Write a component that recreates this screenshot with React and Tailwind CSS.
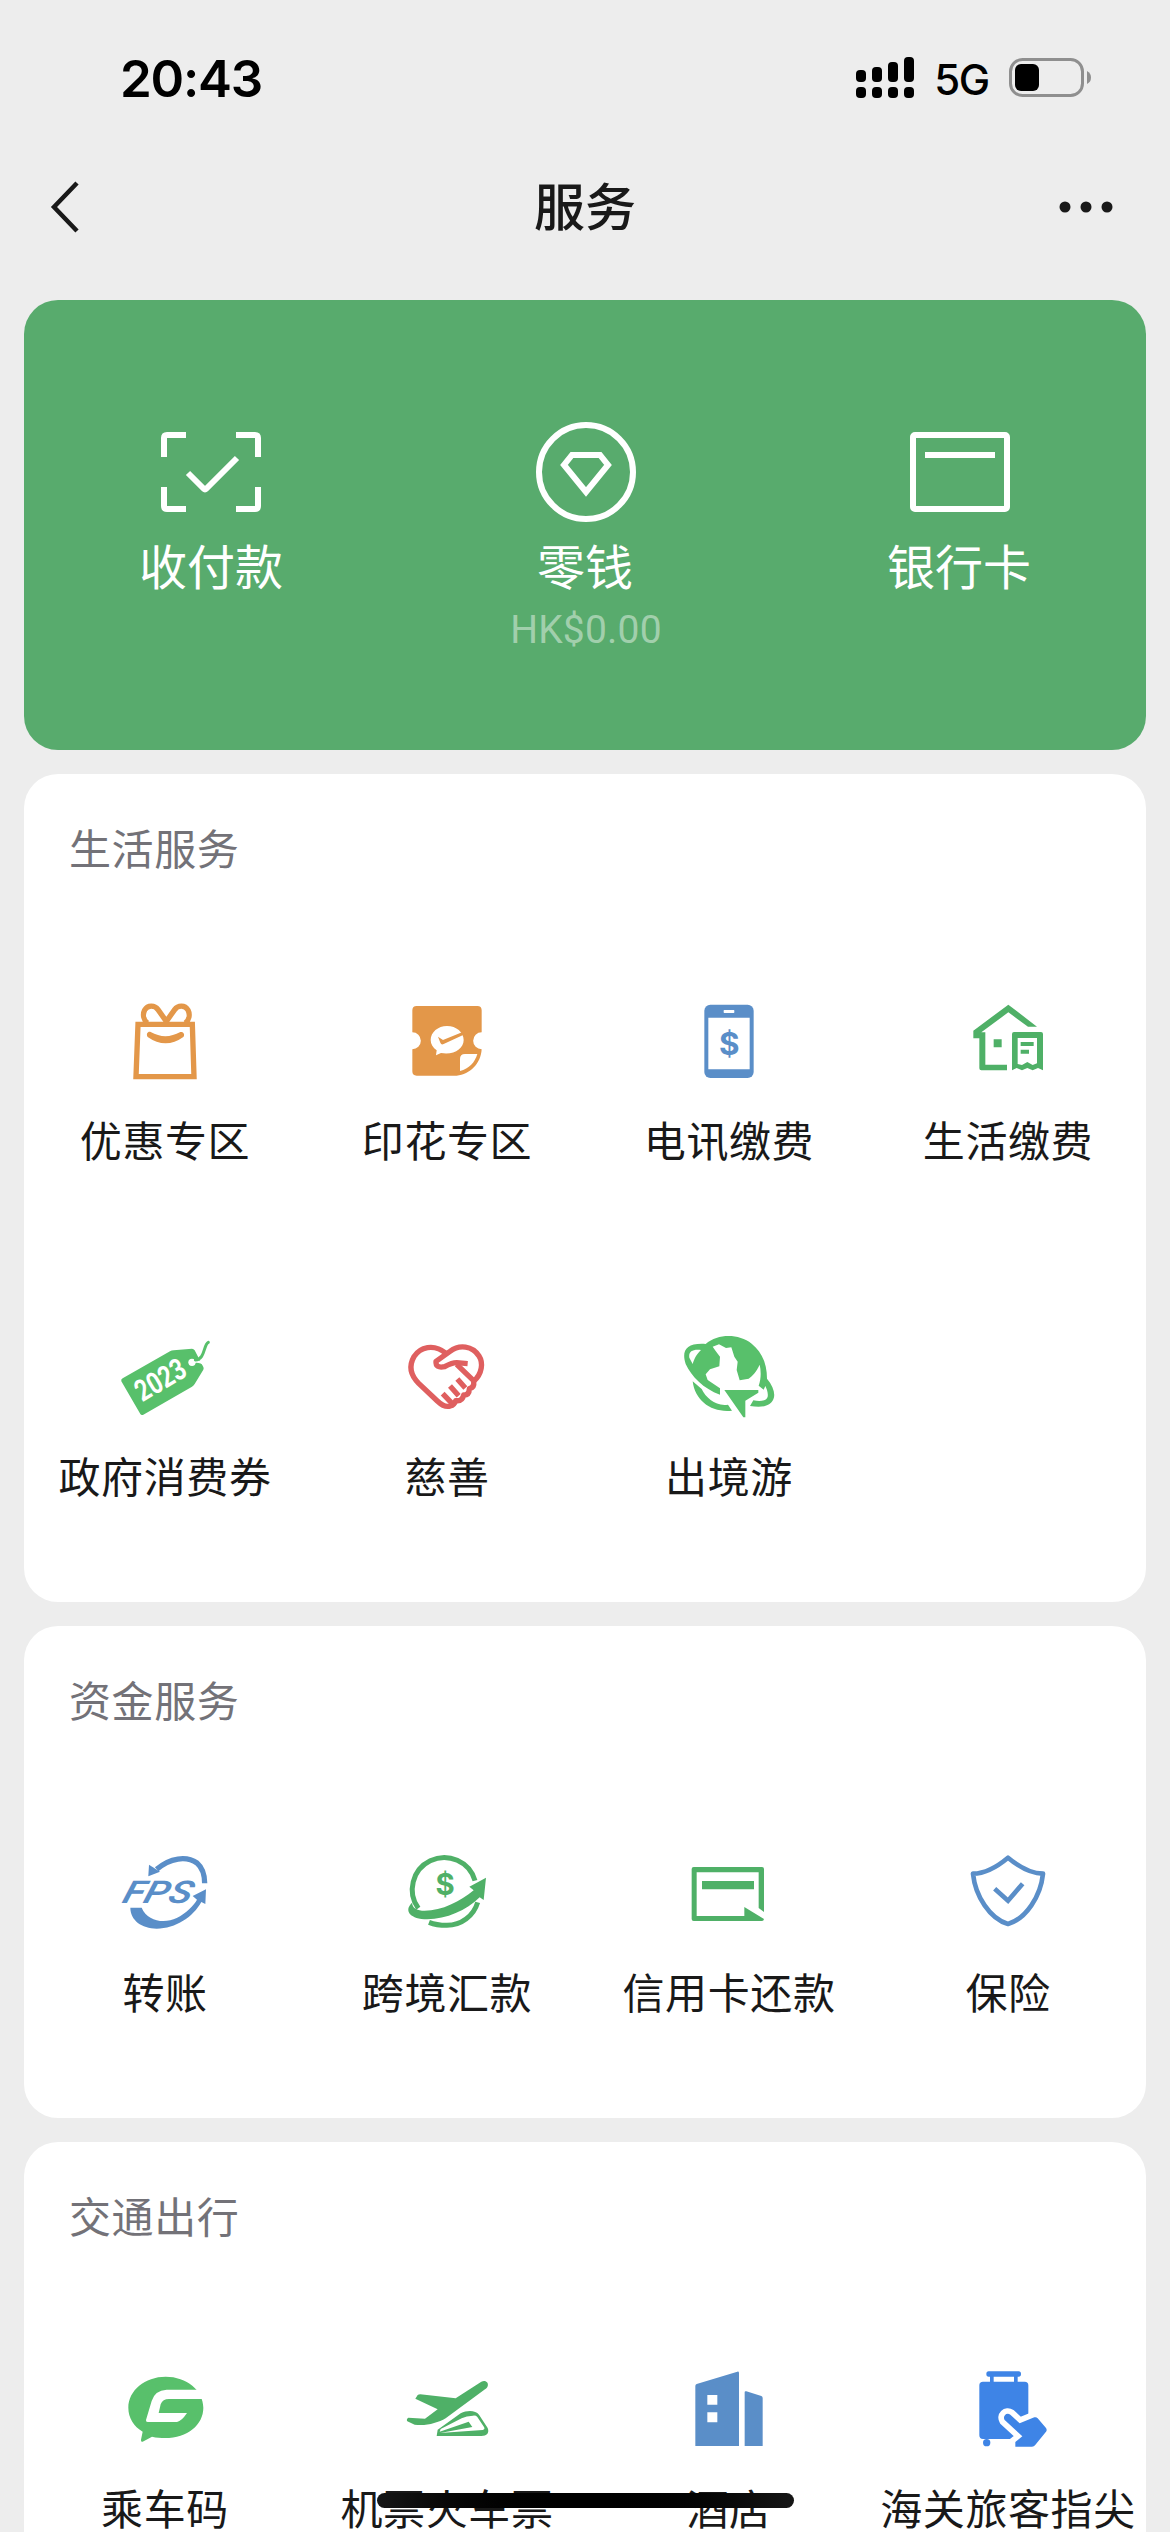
const ORANGE = '#e39749';
const BLUE = '#5a8ec8';
const GREEN = '#4fb067';
const LIGHT_GREEN = '#58c06b';

function Icon({ box, children }) {
  return (
    <svg viewBox={box} className="w-24 h-24 overflow-visible" fill="none">
      {children}
    </svg>
  );
}

const GiftBag = () => (
  <Icon box="171 69 288 288">
    <g stroke={ORANGE} strokeWidth="16">
      <path d="M234 163H397L402 320H228Z" />
      <path d="M319 154 294 119C284 105 263 105 254 120C247 134 251 150 262 159M319 154 344 119C354 105 375 105 384 120C391 134 387 150 376 159" />
    </g>
    <path d="M272 186Q316 211 361 186C370 184 376 193 370 201Q317 239 263 201C257 192 264 183 272 186Z" fill={ORANGE} />
  </Icon>
);

const Stamp = () => (
  <Icon box="1017 69 288 288">
    <path
      d="M1070 108H1252Q1265 108 1265 121V187A25 25 0 0 0 1265 238C1263 280 1230 314 1190 317H1070Q1057 317 1057 304V238A25 25 0 0 0 1057 187V121Q1057 108 1070 108Z"
      fill={ORANGE}
    />
    <path d="M1200 303V267Q1200 252 1215 252H1252C1245 277 1227 296 1200 303Z" fill="#fff" />
    <path d="M1161 168C1189 168 1211 187 1211 210C1211 236 1182 256 1143 249L1128 256L1130 241C1119 233 1112 222 1112 210C1112 187 1134 168 1161 168Z" fill="#fff" />
    <path d="M1134 200 1149 210 1208 186 1211 194 1151 222Q1144 226 1141 218Z" fill={ORANGE} />
  </Icon>
);

const Phone = () => (
  <Icon box="123 69 288 288">
    <rect x="193" y="104" width="148" height="220" rx="18" fill={BLUE} />
    <path d="M205 143H329V298H205Z" fill="#fff" />
    <rect x="251" y="120" width="32" height="9" rx="2" fill="#fff" />
    <text x="268" y="256" textAnchor="middle" fontSize="94" fontWeight="700" fontFamily="Inter, sans-serif" fill={BLUE}>$</text>
  </Icon>
);

const House = () => (
  <Icon box="960 69 288 288">
    <g fill={GREEN}>
      <path d="M1000 182 1105 104 1191 170H1164L1105 127 1024 187H1036V284H1101V301H1024Q1018 301 1018 295V205H1000Z" />
      <path d="M1061 208h24v24h-24zM1142 216h39v12h-39zM1142 239h25v12h-25z" />
      <path
        fillRule="evenodd"
        d="M1122 186H1203Q1209 186 1209 192V301L1194 294 1178 301 1162 294 1146 301 1130 294 1116 301V192Q1116 186 1122 186ZM1133 204V282L1146 285 1162 276 1178 285 1191 280V204Z"
      />
    </g>
  </Icon>
);

const VoucherTag = () => (
  <Icon box="201 57 288 288">
    <path
      d="M218 205 360 124Q365 121 371 121L426 116Q431 116 434 121L460 171Q462 175 460 179L434 222Q431 227 426 230L280 314Q274 317 271 312L214 214Q212 208 218 205Z"
      fill={LIGHT_GREEN}
    />
    <path d="M426 156C446 152 458 158 464 166" stroke="#fff" strokeWidth="7" />
    <circle cx="426" cy="157" r="11" fill="#fff" />
    <path d="M436 150C466 148 460 104 475 97" stroke={LIGHT_GREEN} strokeWidth="9" strokeLinecap="round" />
    <text
      transform="translate(277 277) rotate(-30.5)"
      fontSize="90"
      fontWeight="700"
      fontFamily="Roboto, sans-serif"
      textLength="162"
      lengthAdjust="spacingAndGlyphs"
      fill="#fff"
    >
      2023
    </text>
  </Icon>
);

const HeartHands = () => (
  <Icon box="1047 57 288 288">
    <g stroke="#df5f5f" strokeWidth="16" strokeLinejoin="round">
      <path d="M1188 130C1150 99 1110 112 1092 140C1075 170 1084 198 1106 220L1162 273Q1184 294 1201 288Q1213 285 1217 272Q1237 275 1241 255Q1258 255 1258 236Q1274 232 1271 214" />
      <path d="M1271 214C1297 191 1300 158 1287 138C1267 107 1228 103 1200 124L1158 154Q1156 176 1184 170Q1206 158 1220 158L1253 161" />
      <path d="M1220 163 1273 214M1222 207 1246 234M1200 228 1226 257M1178 251 1206 280" />
    </g>
  </Icon>
);

const Globe = () => (
  <Icon box="183 57 288 288">
    <g fill={LIGHT_GREEN}>
      <path
        fillRule="evenodd"
        d="M257 102C295 70 356 71 395 101C427 127 441 163 441 206C458 226 465 246 462 262C456 290 425 294 390 288L400 271C425 276 440 271 443 260C445 248 440 237 436 228L431 239 416 227C424 204 423 182 419 164C409 185 399 197 386 206L359 211 350 180 353 155 343 140 334 112 318 114 297 103 278 110 287 123 300 140 298 169 270 178 257 193 263 210 300 235V254C250 236 215 200 197 162C184 123 198 98 257 102ZM243 120C217 117 205 125 208 143L218 162C224 143 231 132 243 120Z"
      />
      <path d="M218 214 245 237C258 264 288 290 324 284L336 302C275 309 225 273 218 214ZM313 240H415V248L376 272V322H370Z" />
    </g>
  </Icon>
);

const Fps = () => (
  <Icon box="171 45 288 288">
    <path d="M290 118C330 83 380 77 411 99Q434 119 434 160" stroke={BLUE} strokeWidth="16" />
    <g fill={BLUE}>
      <path d="M267 104 265 139 300 125Z" />
      <path d="M211 233H245C262 274 313 282 350 264C378 250 402 226 411 209L398 198 438 178 436 222 424 216C400 260 347 296 290 296C245 295 211 271 211 233Z" />
    </g>
    <text
      transform="translate(183 218) skewX(-17)"
      fontSize="94"
      fontWeight="600"
      fontStyle="italic"
      fontFamily="Roboto, sans-serif"
      textLength="206"
      lengthAdjust="spacingAndGlyphs"
      fill={BLUE}
    >
      FPS
    </text>
  </Icon>
);

const Remit = () => (
  <Icon box="1017 45 288 288">
    <path d="M1075 235A96 96 0 1 1 1245 152M1107 277Q1130 286 1160 286A96 96 0 0 0 1253 217" stroke={GREEN} strokeWidth="15" />
    <path
      d="M1056 218C1058 233 1066 239 1086 242C1140 245 1200 216 1241 181L1228 170 1278 143 1271 210 1259 202C1215 245 1148 273 1084 267C1042 259 1036 237 1056 218Z"
      fill={GREEN}
    />
    <text x="1155" y="196" textAnchor="middle" fontSize="88" fontWeight="700" fontFamily="Inter, sans-serif" fill={GREEN}>$</text>
  </Icon>
);

const CreditCard = () => (
  <Icon box="243 45 288 288">
    <g fill={GREEN}>
      <path d="M281 111H486Q492 111 492 117V246L476 234V127H290V258H433V231L492 267Q491 273 486 273H281Q275 273 275 267V117Q275 111 281 111Z" />
      <path d="M306 153h156v25h-156z" />
    </g>
  </Icon>
);

const Shield = () => (
  <Icon box="1080 45 288 288">
    <g stroke={BLUE} strokeWidth="14" strokeLinejoin="round">
      <path d="M1224 83Q1280 130 1329 131C1322 199 1278 266 1224 282C1170 266 1126 199 1119 131Q1168 130 1224 83Z" />
      <path d="M1184 176 1224 212 1268 161" strokeLinejoin="miter" />
    </g>
  </Icon>
);

const RideCode = () => (
  <Icon box="171 63 288 288">
    <path d="M317 110C380 110 430 151 430 203C430 263 364 309 276 290L248 305Q242 307 243 299L248 275C221 259 205 233 205 203C205 151 255 110 317 110Z" fill={LIGHT_GREEN} />
    <path d="M440 149H320Q284 151 275 183L258 240Q257 246 263 246H351Q365 243 381 219H296L302 193Q308 177 327 177H440Z" fill="#fff" />
  </Icon>
);

const PlaneTrain = () => (
  <Icon box="1017 63 288 288">
    <path
      d="M1187 175 1264 125C1276 119 1287 127 1283 139C1281 144 1277 147 1271 151L1157 235C1133 249 1097 259 1064 254L1042 244Q1038 238 1045 233L1095 236 1133 208 1066 176 1073 165Q1076 163 1081 163Z"
      fill={GREEN}
    />
    <path
      fillRule="evenodd"
      d="M1130 288 1133 269 1202 220C1222 210 1247 211 1257 224L1283 264C1289 279 1280 288 1264 288ZM1142 267 1139 275 1226 245 1237 261 1140 279 1268 270Q1276 268 1272 261L1252 231Q1248 226 1239 227 1219 228 1205 235Z"
      fill={GREEN}
    />
  </Icon>
);

const Hotel = () => (
  <Icon box="243 63 288 288">
    <path
      fillRule="evenodd"
      d="M286 138Q286 134 290 132L412 95Q417 94 417 99V318H286ZM322 165V194H352V165ZM322 217V247H352V217ZM434 157Q434 152 439 154L484 168Q488 170 488 174V318H434Z"
      fill={BLUE}
    />
  </Icon>
);

const Luggage = () => (
  <Icon box="1080 63 288 288">
    <g fill="#3e84e6">
      <path d="M1166 94H1256Q1263 94 1263 102T1256 110H1253V125H1274Q1285 125 1285 136V286Q1285 297 1274 297H1149Q1138 297 1138 286V136Q1138 125 1149 125H1170V110H1166Q1159 110 1159 102T1166 94ZM1181 110V125H1242V110Z" fillRule="evenodd" />
      <circle cx="1160" cy="308" r="11" />
      <path
        d="M1214 240C1207 229 1219 216 1231 224L1259 250 1303 232Q1309 230 1313 235L1338 264Q1342 270 1338 275L1305 316Q1302 320 1296 320H1246V306L1267 289Z"
        stroke="#fff"
        strokeWidth="34"
        paintOrder="stroke"
      />
    </g>
  </Icon>
);

const sections = [
  {
    title: '生活服务',
    items: [
      { name: '优惠专区', icon: GiftBag },
      { name: '印花专区', icon: Stamp },
      { name: '电讯缴费', icon: Phone },
      { name: '生活缴费', icon: House },
      { name: '政府消费券', icon: VoucherTag },
      { name: '慈善', icon: HeartHands },
      { name: '出境游', icon: Globe },
    ],
  },
  {
    title: '资金服务',
    items: [
      { name: '转账', icon: Fps },
      { name: '跨境汇款', icon: Remit },
      { name: '信用卡还款', icon: CreditCard },
      { name: '保险', icon: Shield },
    ],
  },
  {
    title: '交通出行',
    items: [
      { name: '乘车码', icon: RideCode },
      { name: '机票火车票', icon: PlaneTrain },
      { name: '酒店', icon: Hotel },
      { name: '海关旅客指尖', icon: Luggage },
    ],
  },
];

function StatusBar() {
  return (
    <div className="h-[156px] pl-[120px] pr-[78px] flex items-center justify-between font-['Inter',sans-serif] text-black">
      <span className="text-[51px] leading-none font-semibold tracking-[-1.2px]">20:43</span>
      <div className="flex items-center">
        <svg width="58" height="42" viewBox="0 0 58 42">
          <rect x="0" y="13" width="10" height="12" rx="4" />
          <rect x="16" y="10" width="10" height="15" rx="4" />
          <rect x="32" y="5" width="10" height="20" rx="4" />
          <rect x="48" y="0" width="10" height="25" rx="4" />
          <rect x="0" y="30" width="10" height="11" rx="4" />
          <rect x="16" y="30" width="10" height="11" rx="4" />
          <rect x="32" y="30" width="10" height="11" rx="4" />
          <rect x="48" y="30" width="10" height="11" rx="4" />
        </svg>
        <span className="w-[95px] pt-[3px] text-center text-[42px] leading-none font-medium tracking-[-1.5px]">5G</span>
        <svg width="83" height="40" viewBox="0 0 83 40">
          <rect x="1.5" y="1.5" width="72" height="36" rx="12" fill="none" stroke="#8f8f8f" strokeWidth="3" />
          <rect x="6" y="6" width="24" height="27" rx="6" />
          <path d="M78 13Q82 15 82 19.500T78 26Z" fill="#8f8f8f" />
        </svg>
      </div>
    </div>
  );
}

function NavBar() {
  return (
    <div className="h-[102px] pl-[50px] pr-[57px] grid grid-cols-[1fr_auto_1fr] items-center text-[#191919]">
      <svg width="30" height="52" viewBox="0 0 30 52" fill="none" stroke="currentColor" strokeWidth="4.5">
        <path d="M27 2 4 26 27 50" />
      </svg>
      <h1 className="pl-[7px] pb-[5px] text-[51px] leading-none font-medium">服务</h1>
      <svg className="justify-self-end" width="54" height="12" viewBox="0 0 54 12" fill="currentColor">
        <circle cx="6" cy="6" r="5.5" />
        <circle cx="27" cy="6" r="5.5" />
        <circle cx="48" cy="6" r="5.5" />
      </svg>
    </div>
  );
}

function WalletCard() {
  return (
    <div className="h-[450px] pt-[120px] grid grid-cols-3 rounded-[34px] bg-[#58ab6d] text-white">
      <div className="flex flex-col items-center">
        <svg width="104" height="104" viewBox="0 0 104 104" fill="none" stroke="#fff" strokeWidth="6">
          <path d="M5 37V18Q5 15 8 15H27M77 15H96Q99 15 99 18V37M99 67V86Q99 89 96 89H77M27 89H8Q5 89 5 86V67" />
          <path d="M29 53 45 69Q46 70 47 69L78 38" />
        </svg>
        <span className="mt-3 text-[48px] leading-[56px]">收付款</span>
      </div>
      <div className="flex flex-col items-center">
        <svg width="104" height="104" viewBox="0 0 104 104" fill="none" stroke="#fff" strokeWidth="6">
          <circle cx="53" cy="52" r="47" />
          <path d="M39 35H67L75 45 53 72 31 45Z" />
        </svg>
        <span className="mt-3 text-[48px] leading-[56px]">零钱</span>
        <span className="mt-4 pl-0.5 text-[39px] leading-[44px] tracking-[0.2px] text-white/45 font-['Roboto',sans-serif]">HK$0.00</span>
      </div>
      <div className="flex flex-col items-center">
        <svg width="104" height="104" viewBox="0 0 104 104" fill="none" stroke="#fff" strokeWidth="6">
          <rect x="6" y="15" width="94" height="74" rx="2" />
          <path d="M18 35H88" />
        </svg>
        <span className="mt-3 text-[48px] leading-[56px]">银行卡</span>
      </div>
    </div>
  );
}

function Section({ title, items }) {
  return (
    <section className="rounded-[34px] bg-white">
      <h2 className="h-[156px] pt-[45px] pl-[45px] text-[42px] leading-[56px] tracking-[0.6px] text-[#737278]">{title}</h2>
      <div className="grid grid-cols-[282px_282px_282px_276px]">
        {items.map(({ name, icon: ServiceIcon }) => (
          <div key={name} className="h-[336px] pt-[63px] flex flex-col items-center">
            <ServiceIcon />
            <span className="mt-[27px] text-[42px] leading-[46px] tracking-[0.6px] text-[#191919] whitespace-nowrap">{name}</span>
          </div>
        ))}
      </div>
    </section>
  );
}

export default function App() {
  return (
    <div className="relative w-[1170px] h-[2532px] overflow-hidden bg-[#ededed] font-['Noto_Sans_CJK_SC',sans-serif]">
      <StatusBar />
      <NavBar />
      <main className="mt-[42px] px-6 flex flex-col gap-6">
        <WalletCard />
        {sections.map(section => (
          <Section key={section.title} title={section.title} items={section.items} />
        ))}
      </main>

      {/* Home indicator */}
      <div className="absolute bottom-6 left-[377px] w-[417px] h-[15px] rounded-full bg-linear-to-r from-[#161616] via-black to-[#161616]" />
    </div>
  );
}
